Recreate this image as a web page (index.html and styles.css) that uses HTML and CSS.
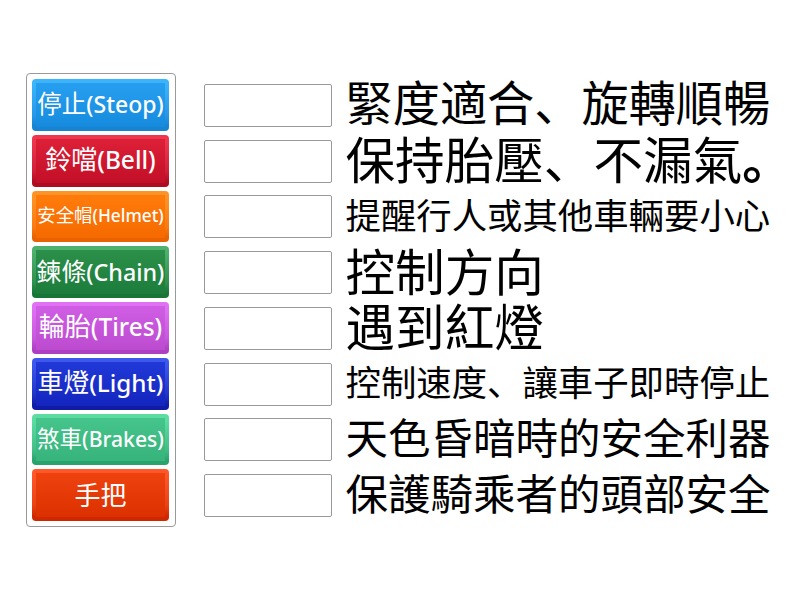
FILE: index.html
```
<!DOCTYPE html>
<html lang="zh-Hans">
<head>
    <meta charset="UTF-8">
    <meta name="viewport" content="width=device-width, initial-scale=1.0">
    <title>Match up</title>
    <link rel="stylesheet" href="styles.css">
</head>
<body>
    <main class="game">
        <div class="tiles">
            <div class="tile blue"><span>停止<b>(Steop)</b></span></div>
            <div class="tile red"><span>鈴噹<b>(Bell)</b></span></div>
            <div class="tile orange"><span>安全帽<b>(Helmet)</b></span></div>
            <div class="tile green"><span>鍊條<b>(Chain)</b></span></div>
            <div class="tile pink"><span>輪胎<b>(Tires)</b></span></div>
            <div class="tile navy"><span>車燈<b>(Light)</b></span></div>
            <div class="tile mint"><span>煞車<b>(Brakes)</b></span></div>
            <div class="tile vermilion"><span>手把</span></div>
        </div>
        <div class="answers">
            <div class="row"><div class="slot"></div><p class="size-9">緊度適合、旋轉順暢</p></div>
            <div class="row"><div class="slot"></div><p class="size-max">保持胎壓、不漏氣<b>。</b></p></div>
            <div class="row"><div class="slot"></div><p class="size-12">提醒行人或其他車輛要小心</p></div>
            <div class="row"><div class="slot"></div><p class="size-max">控制方向</p></div>
            <div class="row"><div class="slot"></div><p class="size-max">遇到紅燈</p></div>
            <div class="row"><div class="slot"></div><p class="size-12">控制速度、讓車子即時停止</p></div>
            <div class="row"><div class="slot"></div><p class="size-10">天色昏暗時的安全利器</p></div>
            <div class="row"><div class="slot"></div><p class="size-10">保護騎乘者的頭部安全</p></div>
        </div>
    </main>
</body>
</html>
```

FILE: styles.css
```
* {
    box-sizing: border-box;
}

body {
    margin: 0;
    background: #fff;
    color: #000;
    font-family: "Noto Sans CJK SC", sans-serif;
}

.game {
    display: flex;
    gap: 28px;
    padding: 73px 0 0 26px;
}

.tiles {
    display: grid;
    grid-template-columns: minmax(0, 1fr);
    grid-template-rows: repeat(8, 1fr);
    gap: 4px;
    width: 150px;
    height: 454px;
    padding: 5px 6px 5px 5px;
    border: 1px solid #999;
    border-radius: 4px;
}

.tile {
    display: flex;
    align-items: center;
    justify-content: center;
    border: 4px solid transparent;
    border-radius: 4px;
    background:
        linear-gradient(var(--from), var(--to)) padding-box,
        linear-gradient(var(--top), var(--top) 12%, var(--side) 70%, var(--bottom) 92%) border-box;
    color: #fff;
    font-size: 25px;
    line-height: 30px;
    white-space: nowrap;
}

.tile span {
    margin-top: -3px;
}

.tile b {
    font-family: "Noto Sans", sans-serif;
    font-size: 0.94em;
    font-weight: 500;
}

.blue { --top: #3bb4fc; --side: #2598e8; --bottom: #1683d3; --from: #279ff0; --to: #168bde; font-size: 24.5px; }
.red { --top: #ee374f; --side: #d02038; --bottom: #ae0c20; --from: #dd2038; --to: #c20f27; font-size: 26px; }
.orange { --top: #ff9426; --side: #fa7b13; --bottom: #e86200; --from: #ff7c0b; --to: #f66a00; font-size: 18.4px; }
.green { --top: #4db06c; --side: #30914e; --bottom: #177538; --from: #2b9049; --to: #1c7c3c; font-size: 24.8px; }
.pink { --top: #e071f5; --side: #c758dd; --bottom: #ad3fc2; --from: #cf5ee4; --to: #bc4bd0; font-size: 26px; }
.navy { --top: #3d58ed; --side: #2036c9; --bottom: #0e1ca6; --from: #2139d8; --to: #1425be; font-size: 25.8px; }
.mint { --top: #5bdda2; --side: #41bf86; --bottom: #27a46b; --from: #45c48b; --to: #36b47b; font-size: 22.5px; }
.vermilion { --top: #ff572a; --side: #eb4212; --bottom: #ce2800; --from: #ee430f; --to: #dc3000; font-size: 26px; }

.answers {
    display: grid;
    grid-template-rows: repeat(8, 55.75px);
    margin-top: 4px;
}

.row {
    display: flex;
    align-items: center;
    gap: 13.5px;
}

.slot {
    width: 128px;
    height: 43px;
    margin-top: 1px;
    border: 1px solid #999;
    border-radius: 2px;
}

.row p {
    margin: 0;
    padding-bottom: 7px;
    line-height: 48px;
    white-space: nowrap;
}

.size-9 {
    font-size: 47.2px;
}

.size-10 {
    font-size: 42.5px;
}

.row .size-12 {
    padding-bottom: 5px;
    font-size: 35.4px;
}

.size-max {
    font-size: 49.6px;
}
```
